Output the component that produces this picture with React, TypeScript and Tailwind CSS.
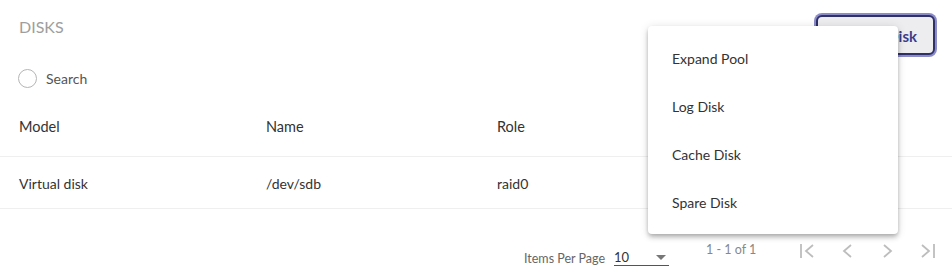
import { useState } from "react";

const menuItems = ["Expand Pool", "Log Disk", "Cache Disk", "Spare Disk"];

export default function App() {
  const [open] = useState(true);

  return (
    <div
      className="relative h-[278px] w-[952px] overflow-hidden bg-white text-[#333]"
      style={{ fontFamily: "Lato, 'Open Sans', sans-serif" }}
    >
      <div className="flex h-[60px] items-start justify-between pl-[19px] pr-[17px] pt-[15px]">
        <h2 className="pt-[2px] text-[16px] leading-[19px] text-[#9e9e9e]">
          DISKS
        </h2>
        <button
          type="button"
          className="flex h-[40px] w-[119px] items-center justify-end rounded-[6px] border-[2px] border-[#2f2f6a] bg-[#ededf0] pr-[16px] pt-[2px] text-[15px] font-bold text-[#3c3c8c] shadow-[0_0_0_2px_#8b8bc8]"
        >
          Add Disk
        </button>
      </div>

      <div className="flex h-[36px] items-center gap-[9px] pl-[18px]">
        <span className="h-[19px] w-[19px] rounded-full border border-[#b5b5b5]" />
        <span className="text-[14px] text-[#555]">Search</span>
      </div>

      <div className="grid h-[61px] grid-cols-[247px_231px_1fr] items-center border-b border-[#efefef] pl-[19px] pt-[2px] text-[14.5px] text-[#333]">
        <span>Model</span>
        <span>Name</span>
        <span>Role</span>
      </div>
      <div className="grid h-[52px] grid-cols-[247px_231px_1fr] items-center border-b border-[#efefef] pl-[19px] pt-[1px] text-[14px] text-[#333]">
        <span>Virtual disk</span>
        <span>/dev/sdb</span>
        <span>raid0</span>
      </div>

      <div className="flex h-[69px] items-start pl-[524px] pt-[34px]">
        <div className="flex items-end pt-[7px]">
          <span className="text-[12.5px] leading-[14px] text-[#666]">Items Per Page</span>
          <div className="ml-[9px] flex w-[55px] items-center justify-between border-b border-[#555] pb-[1px]">
            <span className="text-[13px] leading-[14px] text-[#333]">10</span>
            <span className="mr-[3px] h-0 w-0 border-x-[5px] border-t-[5px] border-x-transparent border-t-[#777]" />
          </div>
        </div>
        <span className="ml-[37px] text-[12.5px] leading-[14px] text-[#888]">1 - 1 of 1</span>
        <div className="ml-[43px] flex items-center gap-[23px] text-[#bdbdbd]">
          <svg width="17" height="16" viewBox="0 0 17 16" fill="none" stroke="currentColor" strokeWidth="1.8">
            <path d="M2 1v14" />
            <path d="M14 2l-7 6 7 6" />
          </svg>
          <svg width="17" height="16" viewBox="0 0 17 16" fill="none" stroke="currentColor" strokeWidth="1.8">
            <path d="M12 2l-7 6 7 6" />
          </svg>
          <svg width="17" height="16" viewBox="0 0 17 16" fill="none" stroke="currentColor" strokeWidth="1.8">
            <path d="M5 2l7 6-7 6" />
          </svg>
          <svg width="17" height="16" viewBox="0 0 17 16" fill="none" stroke="currentColor" strokeWidth="1.8">
            <path d="M3 2l7 6-7 6" />
            <path d="M15 1v14" />
          </svg>
        </div>
      </div>

      {open && (
        <div className="absolute left-[648px] top-[26px] w-[250px] rounded-[4px] bg-white py-[8px] shadow-[0_2px_4px_-1px_rgba(0,0,0,0.2),0_4px_5px_0_rgba(0,0,0,0.14),0_1px_10px_0_rgba(0,0,0,0.12)]">
          {menuItems.map((item) => (
            <div key={item} className="flex h-[48px] items-center px-[24px] text-[14px] text-[#333]">
              {item}
            </div>
          ))}
        </div>
      )}
    </div>
  );
}
